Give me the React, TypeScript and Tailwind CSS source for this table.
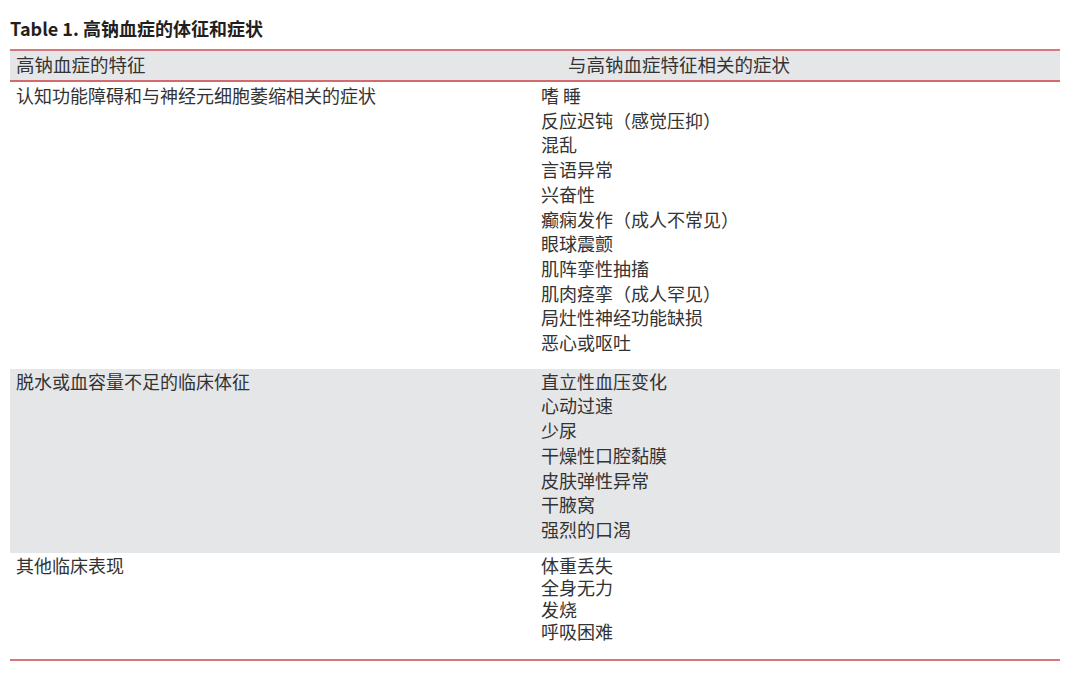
import React from "react";

const font = { fontFamily: '"Noto Sans CJK SC", "Liberation Sans", sans-serif' };

const rows: { left: string; items: string[]; lh: string; pad: string; bg: string }[] = [
  {
    left: "认知功能障碍和与神经元细胞萎缩相关的症状",
    items: [
      "嗜 睡",
      "反应迟钝（感觉压抑）",
      "混乱",
      "言语异常",
      "兴奋性",
      "癫痫发作（成人不常见）",
      "眼球震颤",
      "肌阵挛性抽搐",
      "肌肉痉挛（成人罕见）",
      "局灶性神经功能缺损",
      "恶心或呕吐",
    ],
    lh: "leading-[24.7px]",
    pad: "pt-[1px] pb-[14px]",
    bg: "bg-white",
  },
  {
    left: "脱水或血容量不足的临床体征",
    items: ["直立性血压变化", "心动过速", "少尿", "干燥性口腔黏膜", "皮肤弹性异常", "干腋窝", "强烈的口渴"],
    lh: "leading-[24.7px]",
    pad: "pt-[0px] pb-[11px]",
    bg: "bg-[#e5e6e8]",
  },
  {
    left: "其他临床表现",
    items: ["体重丢失", "全身无力", "发烧", "呼吸困难"],
    lh: "leading-[22px]",
    pad: "pt-[1px] pb-[17px]",
    bg: "bg-white",
  },
];

export default function App() {
  return (
    <div className="w-[1080px] h-[680px] bg-white text-[#333]" style={font}>
      <div className="pt-[17px] pl-[10px] text-[18px] font-bold leading-[22px] text-[#231f20]">
        Table 1. 高钠血症的体征和症状
      </div>
      <div className="mt-[10px] ml-[10px] w-[1050px] border-t-2 border-b-2 border-[#d9787c]">
        <div className="grid grid-cols-[531px_1fr] bg-[#e5e6e8] border-b-2 border-[#d46a6e] h-[31px] items-center text-[18.5px] leading-[24px]">
          <div className="pl-[6px] -mt-[3px]">高钠血症的特征</div>
          <div className="pl-[27px] -mt-[3px]">与高钠血症特征相关的症状</div>
        </div>
        {rows.map((r, i) => (
          <div key={i} className={`grid grid-cols-[531px_1fr] text-[18px] ${r.bg} ${r.pad}`}>
            <div className={`pl-[6px] ${r.lh}`}>{r.left}</div>
            <div className="flex flex-col">
              {r.items.map((t, j) => (
                <div key={j} className={r.lh}>
                  {t}
                </div>
              ))}
            </div>
          </div>
        ))}
      </div>
    </div>
  );
}
